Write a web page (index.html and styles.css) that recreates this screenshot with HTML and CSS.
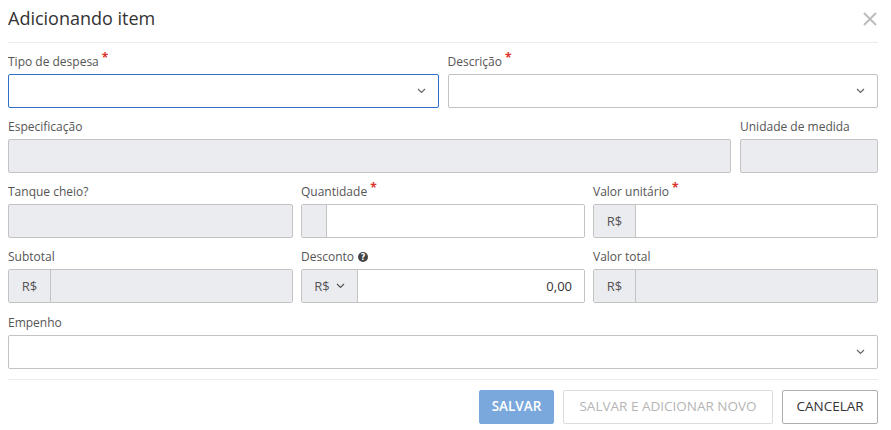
FILE: index.html
```html
<!DOCTYPE html>
<html lang="pt-BR">
<head>
<meta charset="utf-8">
<title>Adicionando item</title>
<link rel="stylesheet" href="styles.css">
</head>
<body>
<div class="modal">
  <div class="modal-header">
    <h1 class="title">Adicionando item</h1>
    <button class="close" aria-label="Fechar">
      <svg width="14" height="14" viewBox="0 0 14 14"><path d="M1 1 L13 13 M13 1 L1 13" stroke="#bdbdbd" stroke-width="2" fill="none"/></svg>
    </button>
  </div>
  <div class="modal-body">
    <div class="row cols-2">
      <div class="field">
        <label class="label">Tipo de despesa <span class="req">*</span></label>
        <div class="control select focused"><span class="chev"><svg width="9" height="6" viewBox="0 0 9 6"><path d="M1 1 L4.5 4.5 L8 1" stroke="#666" stroke-width="1.2" fill="none"/></svg></span></div>
      </div>
      <div class="field">
        <label class="label">Descrição <span class="req">*</span></label>
        <div class="control select"><span class="chev"><svg width="9" height="6" viewBox="0 0 9 6"><path d="M1 1 L4.5 4.5 L8 1" stroke="#666" stroke-width="1.2" fill="none"/></svg></span></div>
      </div>
    </div>
    <div class="row cols-spec">
      <div class="field">
        <label class="label">Especificação</label>
        <div class="control disabled"></div>
      </div>
      <div class="field">
        <label class="label">Unidade de medida</label>
        <div class="control disabled"></div>
      </div>
    </div>
    <div class="row cols-3">
      <div class="field">
        <label class="label">Tanque cheio?</label>
        <div class="control disabled"></div>
      </div>
      <div class="field">
        <label class="label">Quantidade <span class="req">*</span></label>
        <div class="group">
          <span class="addon addon-empty"></span>
          <span class="ginput"></span>
        </div>
      </div>
      <div class="field">
        <label class="label">Valor unitário <span class="req">*</span></label>
        <div class="group">
          <span class="addon">R$</span>
          <span class="ginput"></span>
        </div>
      </div>
    </div>
    <div class="row cols-3 row-tall">
      <div class="field">
        <label class="label">Subtotal</label>
        <div class="group">
          <span class="addon">R$</span>
          <span class="ginput disabled"></span>
        </div>
      </div>
      <div class="field">
        <label class="label">Desconto <span class="help"><svg width="10" height="10" viewBox="0 0 10 10"><circle cx="5" cy="5" r="5" fill="#444"/><text x="5" y="8.3" text-anchor="middle" font-family="DejaVu Sans, sans-serif" font-weight="bold" font-size="8" fill="#fff">?</text></svg></span></label>
        <div class="group">
          <span class="addon addon-drop">R$ <svg width="9" height="6" viewBox="0 0 9 6"><path d="M1 1 L4.5 4.5 L8 1" stroke="#555" stroke-width="1.2" fill="none"/></svg></span>
          <span class="ginput value">0,00</span>
        </div>
      </div>
      <div class="field">
        <label class="label">Valor total</label>
        <div class="group">
          <span class="addon">R$</span>
          <span class="ginput disabled"></span>
        </div>
      </div>
    </div>
    <div class="row">
      <div class="field">
        <label class="label">Empenho</label>
        <div class="control select"><span class="chev"><svg width="9" height="6" viewBox="0 0 9 6"><path d="M1 1 L4.5 4.5 L8 1" stroke="#666" stroke-width="1.2" fill="none"/></svg></span></div>
      </div>
    </div>
  </div>
  <div class="modal-footer">
    <button class="btn btn-primary">SALVAR</button>
    <button class="btn btn-muted">SALVAR E ADICIONAR NOVO</button>
    <button class="btn btn-default">CANCELAR</button>
  </div>
</div>
</body>
</html>
```

FILE: styles.css
```css
* { box-sizing: border-box; }
html, body { margin: 0; padding: 0; background: #fff; }
body {
  font-family: "Open Sans", "Liberation Sans", sans-serif;
  color: #333;
}
.modal {
  width: 870px;
  margin-left: 8px;
}
.modal-header {
  display: flex;
  justify-content: space-between;
  align-items: flex-start;
  padding-top: 6px;
  height: 43px;
  border-bottom: 1px solid #ececec;
}
.title {
  margin: 0;
  font-size: 18px;
  font-weight: 400;
  line-height: 24px;
  color: #333;
}
.close {
  border: 0;
  background: none;
  padding: 0;
  margin: 6px -2px 0 0;
  width: 20px;
  height: 14px;
  display: flex;
  justify-content: center;
}
.modal-body {
  padding-top: 10px;
}
.row {
  display: grid;
  column-gap: 9px;
  margin-bottom: 10px;
}
.row-tall { margin-bottom: 11px; }
.cols-2 { grid-template-columns: 1fr 1fr; }
.cols-spec { grid-template-columns: 1fr 138px; }
.cols-3 { grid-template-columns: 285px 284px 285px; column-gap: 8px; }
.label {
  display: flex;
  align-items: flex-start;
  gap: 3px;
  font-size: 12px;
  line-height: 17px;
  height: 17px;
  color: #555;
  margin-bottom: 4px;
}
.req {
  color: #d9342b;
  font-size: 12px;
  line-height: 10px;
  font-weight: 700;
}
.help {
  display: flex;
  align-items: center;
  height: 17px;
  margin-left: 1px;
}
.control {
  height: 34px;
  border: 1px solid #c3c3c3;
  border-radius: 2px;
  background: #fff;
}
.control.disabled { background: #ebecf0; }
.control.focused { border-color: #2f6fc8; }
.select {
  display: flex;
  align-items: center;
  justify-content: flex-end;
  padding-right: 12px;
}
.chev { display: flex; }
.group {
  display: flex;
  height: 34px;
  border: 1px solid #c3c3c3;
  border-radius: 2px;
  overflow: hidden;
}
.addon {
  display: flex;
  align-items: center;
  justify-content: center;
  width: 42px;
  background: #ebecf0;
  border-right: 1px solid #c3c3c3;
  font-size: 13px;
  color: #555;
  flex: none;
}
.addon-empty { width: 25px; }
.addon-drop { width: 56px; gap: 6px; }
.ginput {
  flex: 1;
  background: #fff;
}
.ginput.disabled { background: #ebecf0; }
.ginput.value {
  display: flex;
  align-items: center;
  justify-content: flex-end;
  padding-right: 12px;
  font-size: 13px;
  color: #333;
}
.modal-footer {
  display: flex;
  justify-content: flex-end;
  gap: 9px;
  border-top: 1px solid #ececec;
  margin-top: 10px;
  padding-top: 10px;
}
.btn {
  height: 34px;
  font-family: "Open Sans", "Liberation Sans", sans-serif;
  font-size: 13.5px;
  border-radius: 2px;
  padding: 0;
  background: #fff;
  line-height: 1;
}
.btn-primary {
  background: #7aa8dc;
  border: 1px solid #7aa8dc;
  color: #fff;
  font-weight: 600;
  width: 75px;
}
.btn-muted {
  border: 1px solid #dcdcdc;
  color: #b5b5b5;
  width: 210px;
}
.btn-default {
  border: 1px solid #adadad;
  color: #333;
  width: 96px;
}
```
